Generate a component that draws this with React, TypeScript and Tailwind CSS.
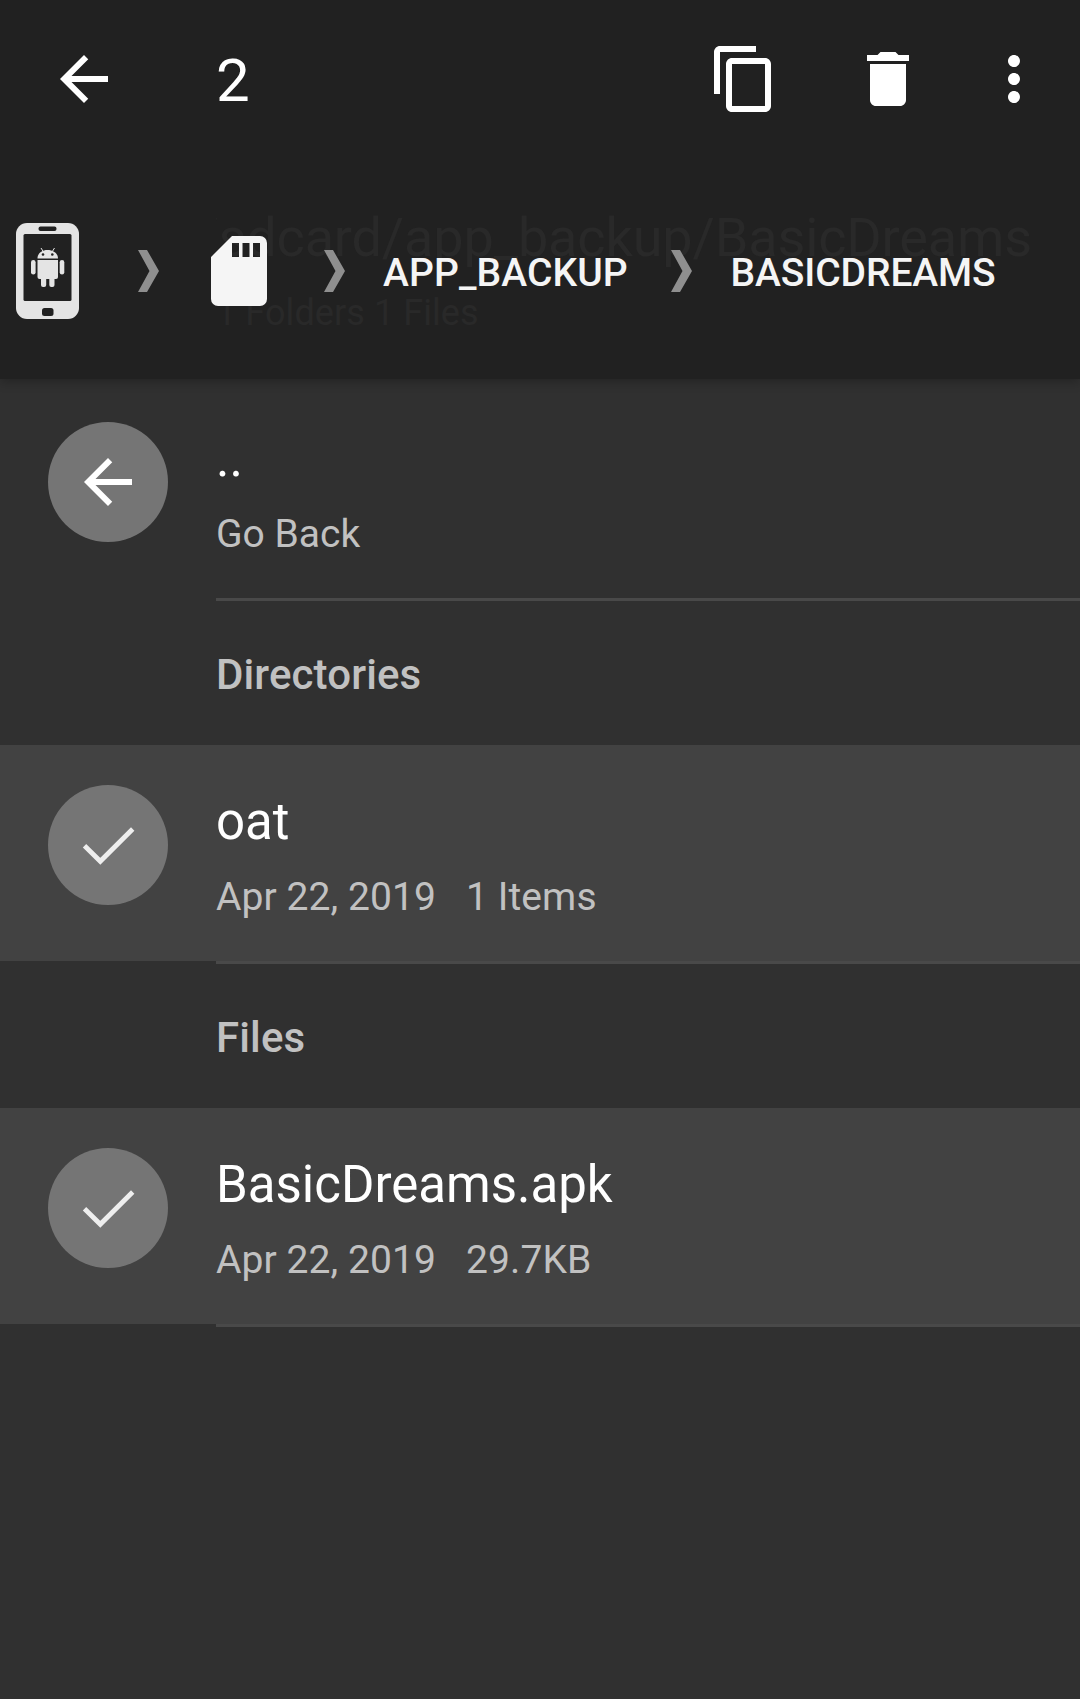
import React from "react";

const BackArrow = () => (
  <svg viewBox="0 0 24 24" className="size-[72px] shrink-0" fill="#fff">
    <path d="M20 11H7.83l5.59-5.59L12 4l-8 8 8 8 1.41-1.41L7.83 13H20v-2z" />
  </svg>
);

const CheckMark = () => (
  <svg viewBox="0 0 72 72" className="size-[72px]" fill="none" stroke="#eee" strokeWidth="4.8">
    <path d="M12.5 36.7 28.3 52.300 60.7 20" />
  </svg>
);

const Chevron = ({ className = "" }: { className?: string }) => (
  <svg viewBox="0 0 21 42" className={`h-[42px] w-[21px] shrink-0 ${className}`} fill="#8f8f8f">
    <path d="M0 0H9L21 21 9 42H0L11.5 21Z" />
  </svg>
);

const PhoneIcon = () => (
  <svg viewBox="0 0 63 96" className="ml-[15.5px] h-24 w-[63px] shrink-0">
    <rect width="63" height="96" rx="11" fill="#e4e4e4" />
    <rect x="22.500" y="3.500" width="18" height="4.500" rx="2" fill="#212121" />
    <rect x="7.500" y="11" width="48" height="67" rx="1.500" fill="#212121" />
    <rect x="26" y="85" width="11.500" height="8" rx="2.500" fill="#212121" />
    <g fill="#e4e4e4">
      <path d="M21.500 35.500c0-5 4-8.500 10-8.500s10.500 3.500 10.500 8.500z" />
      <path d="M25 25l2.500 4M38.500 25l-2.500 4" stroke="#e4e4e4" strokeWidth="1" />
      <path d="M21.500 37H42v17q0 2-2 2H23.500q-2 0-2-2z" />
      <rect x="15" y="37" width="4.600" height="14.500" rx="2.300" />
      <rect x="43.700" y="37" width="4.600" height="14.500" rx="2.300" />
      <rect x="25" y="50" width="5.200" height="14" rx="2" />
      <rect x="33.300" y="50" width="5.200" height="14" rx="2" />
    </g>
    <circle cx="27" cy="31.500" r="1.300" fill="#212121" />
    <circle cx="36.300" cy="31.500" r="1.300" fill="#212121" />
  </svg>
);

const SdCard = () => (
  <svg viewBox="0 0 56 70" className="ml-[52px] h-[70px] w-14 shrink-0" fill="#f5f5f5">
    <path
      fillRule="evenodd"
      d="M21 0H49a7 7 0 0 1 7 7V63a7 7 0 0 1-7 7H7a7 7 0 0 1-7-7V21ZM21 7V21H28V7ZM31.500 7V21H38.500V7ZM42 7V21H49V7Z"
    />
  </svg>
);

const Row = ({
  icon,
  title,
  sub,
  extra,
  selected,
}: {
  icon: React.ReactNode;
  title: string;
  sub: string;
  extra?: string;
  selected?: boolean;
}) => (
  <>
    <div className={`flex h-[216px] ${selected ? "bg-[#424242]" : ""}`}>
      <div className="mt-10 ml-12 flex size-[120px] shrink-0 items-center justify-center rounded-full bg-[#757575]">
        {icon}
      </div>
      <div className="ml-12 pt-[47px]">
        <div className="text-[51px] leading-[60px] text-white">{title}</div>
        <div className="mt-[21px] flex text-[39px] leading-[48px] text-[#c1c1c1]">
          <span className={extra ? "tracking-[0.08px]" : ""}>{sub}</span>
          {extra && <span className="ml-[30px] tracking-[0.08px]">{extra}</span>}
        </div>
      </div>
    </div>
    <div className="ml-[216px] h-[3px] bg-[#494949]" />
  </>
);

const Section = ({ children }: { children: string }) => (
  <div className="h-36 pt-[49px] pl-[216px] text-[42px] leading-[50px] font-medium tracking-[0.12px] text-[#c1c1c1]">
    {children}
  </div>
);

export default function App() {
  return (
    <div className="h-[1699px] w-[1080px] overflow-hidden bg-[#303030] font-['Roboto',sans-serif]">
      <header className="relative h-[379px] bg-[#212121] shadow-[0_3px_10px_rgba(0,0,0,0.25)]">
        <div className="flex h-[158px] items-center pr-[30px] pl-12">
          <BackArrow />
          <span className="ml-24 flex-1 pt-[3px] text-[60px] leading-[72px] text-white">2</span>
          <svg viewBox="0 0 24 24" className="size-[72px]" fill="#fff">
            <path d="M16 1H4c-1.1 0-2 .9-2 2v14h2V3h12V1zm3 4H8c-1.1 0-2 .9-2 2v14c0 1.1.9 2 2 2h11c1.1 0 2-.9 2-2V7c0-1.1-.9-2-2-2zm0 16H8V7h11v14z" />
          </svg>
          <svg viewBox="0 0 24 24" className="ml-[72px] size-[72px]" fill="#fff">
            <path d="M6 19c0 1.1.9 2 2 2h8c1.1 0 2-.9 2-2V7H6v12zM19 4h-3.5l-1-1h-5l-1 1H5v2h14V4z" />
          </svg>
          <svg viewBox="0 0 24 24" className="ml-[54px] size-[72px]" fill="#fff">
            <path d="M12 8c1.1 0 2-.9 2-2s-.9-2-2-2-2 .9-2 2 .9 2 2 2zm0 2c-1.1 0-2 .9-2 2s.9 2 2 2 2-.9 2-2-.9-2-2-2zm0 6c-1.1 0-2 .9-2 2s.9 2 2 2 2-.9 2-2-.9-2-2-2z" />
          </svg>
        </div>
        {/* Faded path summary behind the breadcrumb */}
        <div className="absolute top-[206px] left-[216px] w-[816px] text-[#292929]">
          <div className="flex justify-end overflow-hidden text-[54px] leading-[64px] tracking-[-0.13px] whitespace-nowrap">
            /sdcard/app_backup/BasicDreams
          </div>
          <div className="mt-[21px] text-[36px] leading-[44px] tracking-[0.08px]">1 Folders 1 Files</div>
        </div>
        <nav className="relative mt-[65px] flex h-24 items-center text-[39px] leading-[48px] font-medium text-[#f5f5f5]">
          <PhoneIcon />
          <Chevron className="ml-[59.5px]" />
          <SdCard />
          <Chevron className="ml-[57px]" />
          <span className="ml-[38px] w-[288px] pt-1 tracking-[0.1px]">APP_BACKUP</span>
          <Chevron />
          <span className="ml-[38.5px] pt-1 tracking-[-0.1px]">BASICDREAMS</span>
        </nav>
      </header>
      <main className="pt-[3px]">
        <Row icon={<BackArrow />} title=".." sub="Go Back" />
        <Section>Directories</Section>
        <Row icon={<CheckMark />} title="oat" sub="Apr 22, 2019" extra="1 Items" selected />
        <Section>Files</Section>
        <Row icon={<CheckMark />} title="BasicDreams.apk" sub="Apr 22, 2019" extra="29.7KB" selected />
      </main>
    </div>
  );
}
